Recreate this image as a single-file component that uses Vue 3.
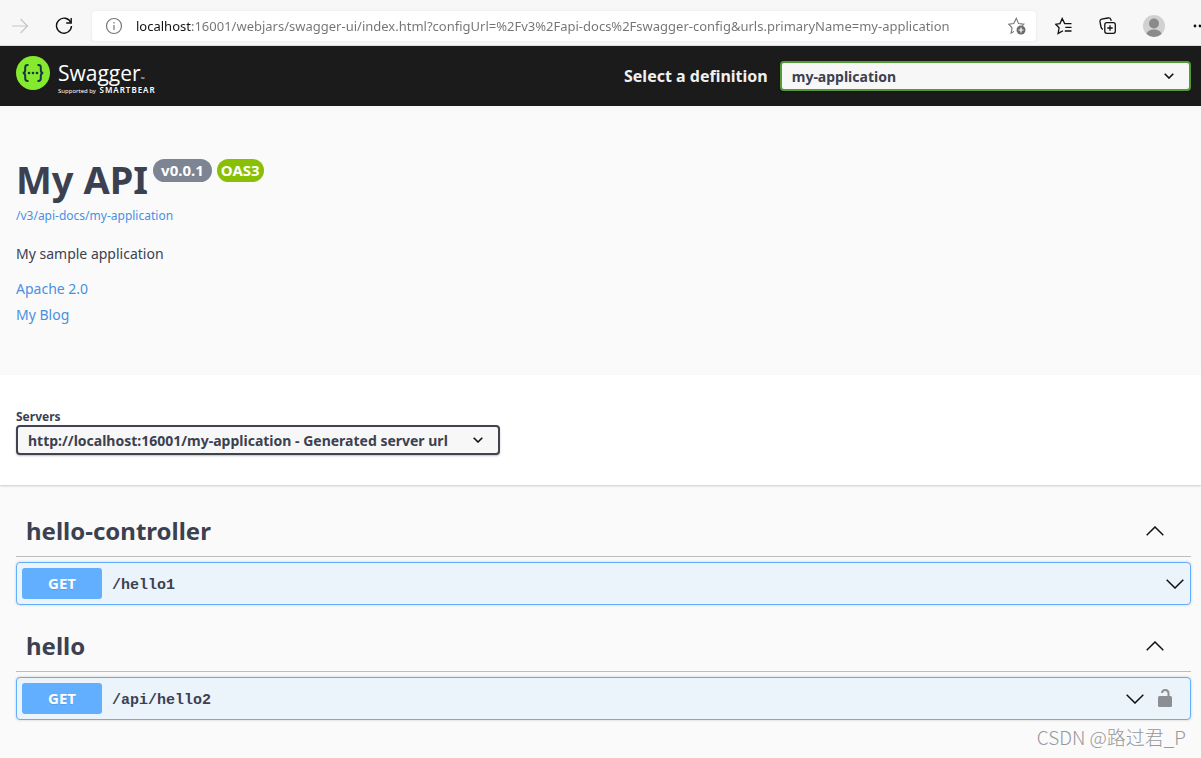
<script setup>
import { ref } from 'vue'

const address = ref(
  'localhost:16001/webjars/swagger-ui/index.html?configUrl=%2Fv3%2Fapi-docs%2Fswagger-config&urls.primaryName=my-application'
)
const definitions = ['my-application']
const definition = ref(definitions[0])
const servers = ['http://localhost:16001/my-application - Generated server url']
const server = ref(servers[0])

const tags = [
  { name: 'hello-controller', operations: [{ method: 'GET', path: '/hello1', secured: false }] },
  { name: 'hello', operations: [{ method: 'GET', path: '/api/hello2', secured: true }] },
]
</script>

<template>
  <div class="page">
    <div class="browser">
      <button class="tool forward" type="button" aria-label="Forward" disabled>
        <svg width="18" height="16" viewBox="0 0 18 16" fill="none" stroke="#c6c6c6" stroke-width="1.2">
          <path d="M0 8h15.500M8.500 1l7 7-7 7" />
        </svg>
      </button>
      <button class="tool reload" type="button" aria-label="Reload">
        <svg width="18" height="18" viewBox="0 0 18 18" fill="none" stroke="#111" stroke-width="1.4">
          <path d="M15.800 5.500A7.500 7.500 0 1 0 16.500 9" />
          <path d="M16.200 1v5h-5" />
        </svg>
      </button>
      <div class="address">
        <svg width="18" height="18" viewBox="0 0 18 18" fill="none" stroke="#767676" stroke-width="1.2">
          <circle cx="9" cy="9" r="7.500" />
          <path d="M9 8v5M9 5v1.500" />
        </svg>
        <input v-model="address" type="text" aria-label="Address" spellcheck="false" />
        <button class="tool" type="button" aria-label="Add to favourites">
          <svg width="18" height="18" viewBox="0 0 18 18" fill="none">
            <path d="M6 14.400l-2.900 1.800 1-5.400L.8 7.200l4.900-.6L8.300 1.400l2.300 5.200 5.200.6-1.600 1.500" stroke="#767676" stroke-width="1.100" />
            <circle cx="13" cy="13" r="4.500" fill="#6b6b6b" />
            <path d="M13 10.500v5M10.500 13h5" stroke="#fff" stroke-width="1.200" />
          </svg>
        </button>
      </div>
      <div class="actions">
        <button class="tool" type="button" aria-label="Favourites">
          <svg width="18" height="18" viewBox="0 0 18 18" fill="none" stroke="#111" stroke-width="1.300">
            <path d="M10.600 6.600h-.9L7.200 1.600 5 6.600l-4.300.6 3.400 3.600-1 5.600 4.900-2.700M9.800 6.600h6.700M10.300 10.300h6.200M9.800 14h6.700" />
          </svg>
        </button>
        <button class="tool" type="button" aria-label="Collections">
          <svg width="18" height="18" viewBox="0 0 18 18" fill="none" stroke="#111" stroke-width="1.300">
            <rect x="5.800" y="5.700" width="10.500" height="10.600" rx="2" />
            <path d="M11 8.300v5.400M8.300 11h5.400M4 12.300C2.700 12 2.200 11 2 10L1 4.700C.8 3.400 1.400 2.500 2.600 2.200L9 1c1.500-.3 2.500.3 2.900 1.600l.3 1.200" />
          </svg>
        </button>
        <button class="tool" type="button" aria-label="Profile">
          <svg width="22" height="22" viewBox="0 0 22 22">
            <circle cx="11" cy="11" r="11" fill="#d1d1d1" />
            <circle cx="11" cy="8.500" r="5" fill="#8a8a8a" />
            <path d="M3.500 19c.7-3 3.700-4.500 7.500-4.500s6.800 1.500 7.500 4.500A11 11 0 0 1 3.500 19z" fill="#8a8a8a" />
          </svg>
        </button>
        <button class="tool more" type="button" aria-label="Settings and more">
          <svg width="18" height="4" viewBox="0 0 18 4" fill="#111">
            <circle cx="4" cy="2" r="1.400" /><circle cx="9" cy="2" r="1.400" /><circle cx="14" cy="2" r="1.400" />
          </svg>
        </button>
      </div>
    </div>

    <header class="topbar">
      <a class="brand" href="#" aria-label="Swagger">
        <svg width="34" height="34" viewBox="0 0 34 34">
          <circle cx="17" cy="17" r="17" fill="#85ea2d" />
          <g fill="none" stroke="#173647" stroke-width="2">
            <path d="M12.500 9h-1c-1.700 0-2.300.8-2.300 2.400v2.800c0 1.700-.7 2.700-2.400 2.800 1.700.1 2.400 1.100 2.400 2.800v2.800c0 1.600.6 2.400 2.300 2.400h1" />
            <path d="M21.500 9h1c1.700 0 2.300.8 2.300 2.400v2.800c0 1.700.7 2.700 2.400 2.800-1.700.1-2.400 1.100-2.400 2.800v2.800c0 1.600-.6 2.400-2.300 2.400h-1" />
          </g>
          <g fill="#173647"><circle cx="13" cy="17" r="1.300" /><circle cx="17" cy="17" r="1.300" /><circle cx="21" cy="17" r="1.300" /></g>
        </svg>
        <span class="wordmark">
          <span class="name">Swagger<small>™</small></span>
          <span class="support">Supported by <b>SMARTBEAR</b></span>
        </span>
      </a>
      <div class="definition">
        <label for="definition">Select a definition</label>
        <div class="picker wide">
          <select id="definition" v-model="definition">
            <option v-for="d in definitions" :key="d">{{ d }}</option>
          </select>
          <svg width="10" height="6" viewBox="0 0 10 6" fill="none" stroke="#111" stroke-width="1.600">
            <path d="M.7.700L5 5 9.300.700" />
          </svg>
        </div>
      </div>
    </header>

    <section class="info">
      <div class="heading">
        <h1>My API</h1>
        <span class="badge version">v0.0.1</span>
        <span class="badge oas">OAS3</span>
      </div>
      <a class="spec" href="#">/v3/api-docs/my-application</a>
      <p>My sample application</p>
      <a class="meta" href="#">Apache 2.0</a>
      <a class="meta" href="#">My Blog</a>
    </section>

    <section class="servers">
      <label for="server">Servers</label>
      <div class="picker">
        <select id="server" v-model="server">
          <option v-for="s in servers" :key="s">{{ s }}</option>
        </select>
        <svg width="10" height="6" viewBox="0 0 10 6" fill="none" stroke="#111" stroke-width="1.600">
          <path d="M.7.700L5 5 9.300.700" />
        </svg>
      </div>
    </section>

    <main>
      <section v-for="tag in tags" :key="tag.name">
        <div class="tag">
          <h2>{{ tag.name }}</h2>
          <button class="tool" type="button" :aria-label="`Collapse ${tag.name}`">
            <svg width="18" height="10" viewBox="0 0 18 10" fill="none" stroke="#111" stroke-width="1.500">
              <path d="M.7 9.200L9 1l8.300 8.200" />
            </svg>
          </button>
        </div>
        <div v-for="op in tag.operations" :key="op.path" class="operation">
          <span class="method">{{ op.method }}</span>
          <a class="path" href="#">{{ op.path }}</a>
          <button class="tool" type="button" :aria-label="`Expand ${op.path}`">
            <svg width="18" height="10" viewBox="0 0 18 10" fill="none" stroke="#111" stroke-width="1.500">
              <path d="M.7.800L9 9 17.300.800" />
            </svg>
          </button>
          <button v-if="op.secured" class="tool lock" type="button" aria-label="Authorize">
            <svg width="14" height="18" viewBox="0 0 14 18">
              <rect y="7" width="14" height="11" rx="1.500" fill="#8b8e92" />
              <path d="M10.500 8V4.500C10.500 2 9.400 1 7.300 1 5.300 1 4.200 2 4 4" fill="none" stroke="#8b8e92" stroke-width="2" />
            </svg>
          </button>
        </div>
      </section>
    </main>
    <div class="watermark">CSDN @路过君_P</div>
  </div>
</template>

<style>
body {
  background: #fafafa;
}
</style>

<style scoped>
.page {
  position: relative;
  min-height: 100vh;
  overflow: hidden;
  box-sizing: border-box;
  background: #fafafa;
  color: #3b4151;
  font-family: 'Noto Sans', 'Open Sans', sans-serif;
}
a {
  color: #4990e2;
  text-decoration: none;
}
.tool {
  display: flex;
  flex: none;
  padding: 0;
  border: 0;
  background: none;
}
.tool svg {
  flex: none;
}
.browser {
  display: flex;
  align-items: center;
  height: 46px;
  padding: 6px 0 0 12px;
  box-sizing: border-box;
  background: #f7f7f7;
  box-shadow: inset 0 -1px #ddd;
}
.reload {
  margin: 0 19px 0 25px;
}
.address {
  display: flex;
  flex: 1;
  align-items: center;
  gap: 13px;
  height: 30px;
  padding: 0 10px 0 13px;
  border-radius: 4px;
  background: #fff;
  box-shadow: 0 0 3px #e4e4e4;
}
.address > svg {
  flex: none;
}
.address input {
  flex: 1;
  min-width: 0;
  padding: 0;
  border: 0;
  outline: 0;
  background: linear-gradient(90deg, #111 56px, #737373 56px);
  background-clip: text;
  color: transparent;
  font: 13px/24px 'Noto Sans', 'Open Sans', sans-serif;
}
.actions {
  display: flex;
  align-items: center;
  gap: 26px;
  margin-left: 19px;
}
.more {
  width: 10px;
  overflow: hidden;
}
.topbar {
  display: flex;
  align-items: center;
  justify-content: space-between;
  height: 60px;
  padding: 0 10px 0 16px;
  box-sizing: border-box;
  background: #1b1b1b;
}
.brand {
  display: flex;
  gap: 8px;
  color: #fff;
}
.wordmark {
  display: flex;
  flex-direction: column;
}
.name {
  padding-top: 4px;
  font-family: 'Open Sans', 'Noto Sans', sans-serif;
  font-size: 21px;
  line-height: 26px;
}
.name small {
  font-size: 5px;
  line-height: 5px;
}
.support {
  font-size: 6px;
  line-height: 10px;
}
.support b {
  margin-left: 2px;
  font-size: 8px;
  font-weight: 600;
  line-height: 8px;
  letter-spacing: 1px;
}
.definition {
  display: flex;
  flex: 0 1 567px;
  align-items: center;
  gap: 12px;
}
.definition label {
  color: #f0f0f0;
  font-size: 16px;
  font-weight: 700;
  white-space: nowrap;
}
.picker {
  display: grid;
  align-items: center;
  width: max-content;
}
.picker > * {
  grid-area: 1 / 1;
}
.picker > svg {
  justify-self: end;
  margin-right: 17px;
  pointer-events: none;
}
.picker.wide {
  flex: 1;
}
.picker select {
  width: 100%;
  height: 30px;
  padding: 0 50px 0 10px;
  border: 2px solid #41444e;
  border-radius: 4px;
  background: #f7f7f7;
  box-shadow: 0 1px 2px rgba(0, 0, 0, 0.25);
  appearance: none;
  color: #3b4151;
  font: 700 14px 'Noto Sans', 'Open Sans', sans-serif;
}
.picker.wide select {
  border-color: #549b36;
}
.info {
  display: flex;
  flex-direction: column;
  align-items: flex-start;
  padding: 48px 16px 47px;
}
.heading {
  display: flex;
  gap: 5px;
}
h1 {
  margin: 0;
  font-size: 38px;
  line-height: 50px;
}
.badge {
  height: 23px;
  margin-top: 5px;
  border-radius: 12px;
  color: #fff;
  font-size: 15px;
  font-weight: 700;
  line-height: 23px;
}
.version {
  padding: 0 8px;
  background: #7d8492;
}
.oas {
  padding: 0 4px;
  background: #89bf04;
}
.spec {
  padding-top: 2px;
  font-size: 12px;
  line-height: 20px;
}
.info p {
  margin: 17px 0 11px;
  font-size: 14px;
  line-height: 22px;
}
.meta {
  font-size: 14px;
  line-height: 26px;
}
.servers {
  padding: 34px 16px 30px;
  background: #fff;
  box-shadow: 0 1px 2px rgba(0, 0, 0, 0.2);
}
.servers label {
  display: block;
  font-size: 12px;
  font-weight: 700;
  line-height: 16px;
}
main {
  padding: 20px 10px 24px 16px;
}
.tag {
  display: flex;
  align-items: center;
  justify-content: space-between;
  height: 52px;
  margin-bottom: 5px;
  padding: 0 27px 0 10px;
  box-sizing: border-box;
  border-bottom: 1px solid #bbbdc1;
}
h2 {
  margin: 0;
  font-size: 24px;
  line-height: 32px;
}
.operation {
  display: flex;
  align-items: center;
  margin-bottom: 15px;
  padding: 5px 6px 5px 5px;
  border: 1px solid #61affe;
  border-radius: 4px;
  background: #ebf3fb;
  box-shadow: 0 0 3px rgba(0, 0, 0, 0.19);
}
.method {
  width: 80px;
  border-radius: 3px;
  background: #61affe;
  color: #fff;
  font-size: 15px;
  font-weight: 700;
  line-height: 31px;
  text-align: center;
  text-shadow: 0 1px 0 rgba(0, 0, 0, 0.1);
}
.path {
  flex: 1;
  padding: 4px 10px 0;
  color: #3b4151;
  font: 700 15px 'Liberation Mono', monospace;
}
.lock {
  margin: 0 12px 2px 14px;
}
.watermark {
  position: absolute;
  right: 15px;
  bottom: 8px;
  color: #97989a;
  font: 300 19px/28px 'Noto Sans CJK SC', sans-serif;
}
</style>
